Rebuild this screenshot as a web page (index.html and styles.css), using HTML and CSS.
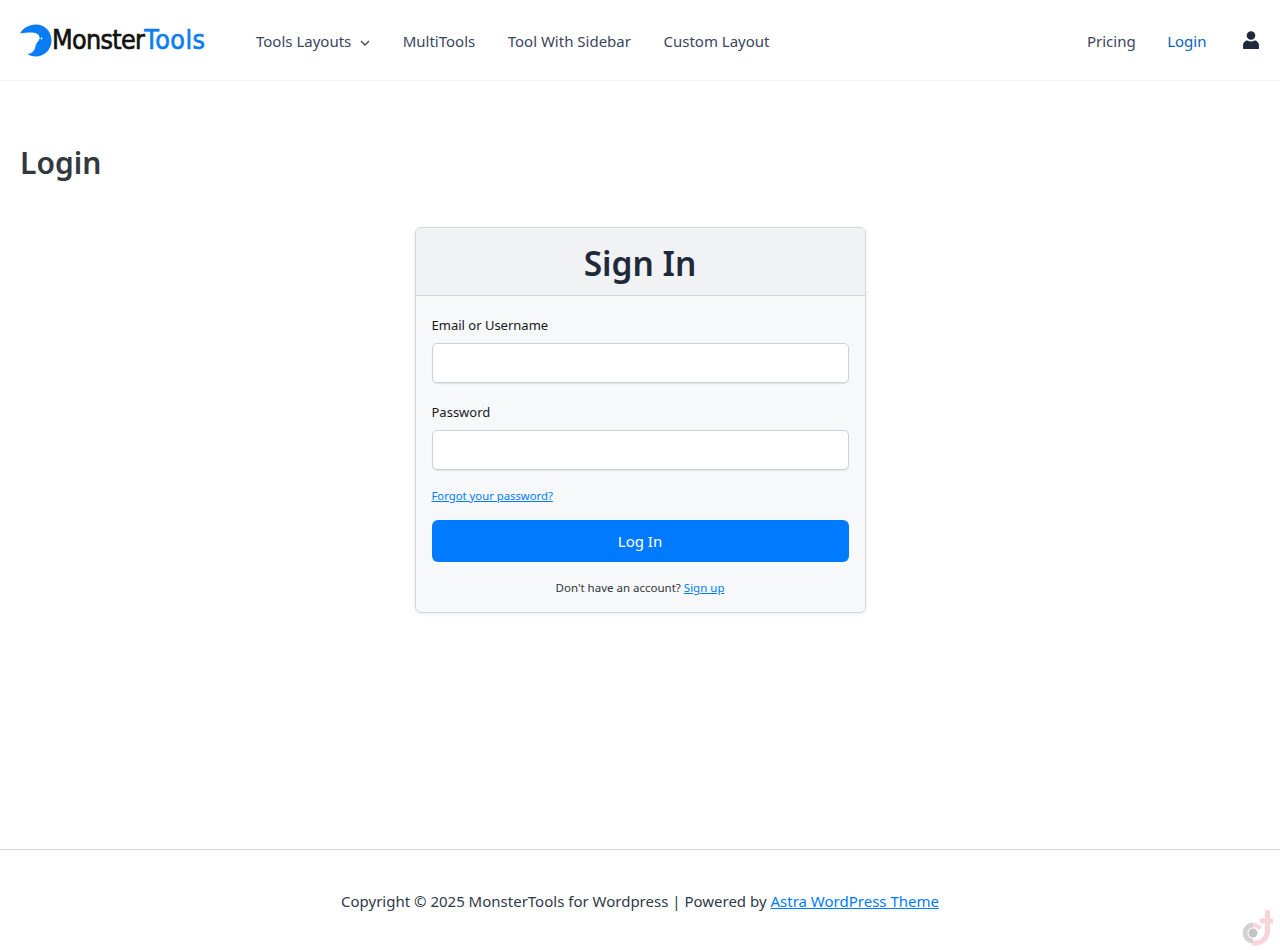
FILE: index.html
```html
<!DOCTYPE html>
<html lang="en">
<head>
    <meta charset="UTF-8">
    <meta name="viewport" content="width=device-width, initial-scale=1.0">
    <title>Login - MonsterTools</title>
    <link rel="stylesheet" href="styles.css">
</head>
<body>
    <header class="site-header">
        <a class="logo" href="#">
            <svg class="logo-mark" width="32" height="33" viewBox="0 0 32 33">
                <path fill="#0a7cf5" d="M0 9.500C3 4 9 0.500 16 0.500C25 0.500 31.500 7.500 31.500 16.500C31.500 25.500 24.500 32.500 15.500 32.500C12 32.500 9.500 31.500 7.500 30C12 29.500 15 26.500 15.500 22C16 19 18.500 17.500 19.500 15C20 13 19 10.500 16.500 9.500C13 8 8 8.500 0 9.500Z"/>
                <circle cx="21.500" cy="14.500" r="0.900" fill="#fff"/>
            </svg>
            <span class="logo-text">Monster<span class="logo-accent">Tools</span></span>
        </a>
        <nav class="main-nav">
            <a href="#">Tools Layouts
                <svg class="caret" width="10" height="6" viewBox="0 0 10 6"><path d="M1 1l4 4 4-4" fill="none" stroke="#3a4560" stroke-width="1.300"/></svg>
            </a>
            <a href="#">MultiTools</a>
            <a href="#">Tool With Sidebar</a>
            <a href="#">Custom Layout</a>
        </nav>
        <nav class="user-nav">
            <a href="#">Pricing</a>
            <a href="#" class="active">Login</a>
            <a href="#" class="user-icon">
                <svg width="16" height="18" viewBox="0 0 16 18"><circle cx="8" cy="4.500" r="4.300" fill="#1e293b"/><path fill="#1e293b" d="M0 17v-2.500C0 11.500 2.500 9.500 4.500 9.500c1 .6 2.200 1 3.500 1s2.500-.4 3.500-1c2 0 4.500 2 4.500 5V17c0 .6-.4 1-1 1H1c-.6 0-1-.4-1-1z"/></svg>
            </a>
        </nav>
    </header>

    <main class="content">
        <h1 class="page-title">Login</h1>

        <div class="login-card">
            <div class="card-head">
                <h2>Sign In</h2>
            </div>
            <form class="card-body" onsubmit="return false;">
                <label for="username">Email or Username</label>
                <input type="text" id="username">
                <label for="password">Password</label>
                <input type="password" id="password">
                <a class="forgot" href="#">Forgot your password?</a>
                <button type="submit">Log In</button>
                <p class="signup">Don't have an account? <a href="#">Sign up</a></p>
            </form>
        </div>
    </main>

    <footer class="site-footer">
        <p>Copyright © 2025 MonsterTools for Wordpress | Powered by <a href="#">Astra WordPress Theme</a></p>
    </footer>

    <svg class="corner-mark" width="34" height="40" viewBox="0 0 34 40">
        <path d="M13 17a8 8 0 0 0 0 16" fill="none" stroke="#d2d2d2" stroke-width="5"/>
        <circle cx="13" cy="25" r="4.500" fill="#c4c4c4"/>
        <path d="M27.500 2v21a12 12 0 0 1-12 12h-3M20 13h13" fill="none" stroke="#f8d3da" stroke-width="5"/>
        <path d="M13 17a8 8 0 0 1 7 4" fill="none" stroke="#f8d3da" stroke-width="4"/>
    </svg>
</body>
</html>
```

FILE: styles.css
```css
body {
    font-family: "Noto Sans", "Open Sans", Arial, sans-serif;
    font-size: 15px;
    color: #1e293b;
    background-color: #fff;
    margin: 0;
    height: 950px;
    overflow: hidden;
    display: flex;
    flex-direction: column;
    position: relative;
}

a {
    text-decoration: none;
    color: inherit;
}

.site-header {
    height: 80px;
    padding: 0 20px;
    border-bottom: 1px solid #eff2f7;
    display: flex;
    align-items: center;
}

.logo {
    display: flex;
    align-items: center;
    width: 236px;
    flex-shrink: 0;
}

.logo-text {
    font-family: "DejaVu Sans", sans-serif;
    font-size: 24px;
    color: #111;
    letter-spacing: -0.700px;
    line-height: 1;
    -webkit-text-stroke: 0.600px #111;
    transform: scaleY(1.12);
    transform-origin: left center;
}

.logo-accent {
    color: #0a7cf5;
    letter-spacing: 0.400px;
    -webkit-text-stroke: 0.600px #0a7cf5;
}

.main-nav {
    display: flex;
    gap: 32.500px;
    flex: 1;
    color: #3a4560;
    padding-top: 2px;
}

.caret {
    margin-left: 5px;
    vertical-align: 1px;
}

.user-nav {
    display: flex;
    align-items: center;
    gap: 31.500px;
    color: #3a4560;
    padding-top: 2px;
}

.user-nav .active {
    color: #0a63c2;
}

.user-icon {
    display: flex;
    margin-left: 5px;
    margin-right: 1px;
    margin-top: -2px;
}

.content {
    flex: 1;
    padding: 0 20px;
}

.page-title {
    font-size: 30px;
    font-weight: 600;
    color: #33373e;
    line-height: 40px;
    margin: 62px 0 44px;
}

.login-card {
    width: 449px;
    margin: 0 auto;
    background: #f7f8fa;
    border: 1px solid #d4d6da;
    border-radius: 6px;
    box-shadow: 0 1px 4px rgba(0, 0, 0, 0.08);
    overflow: hidden;
}

.card-head {
    height: 67px;
    background: #f1f2f4;
    border-bottom: 1px solid #d4d6da;
    display: flex;
    align-items: center;
    justify-content: center;
}

.card-head h2 {
    margin: 4px 0 0;
    font-size: 33.500px;
    font-weight: 600;
    line-height: 1;
}

.card-body {
    padding: 20px 16px 16px;
    display: flex;
    flex-direction: column;
}

label {
    font-size: 13px;
    line-height: 18px;
    color: #16181d;
    margin-bottom: 9px;
}

input {
    height: 40px;
    box-sizing: border-box;
    border: 1px solid #cdd0d6;
    border-radius: 5px;
    background: #fff;
    box-shadow: 0 1px 1px rgba(0, 0, 0, 0.08);
    margin-bottom: 20px;
}

#password {
    margin-bottom: 18px;
}

.forgot {
    font-size: 11.300px;
    line-height: 16px;
    color: #007bff;
    text-decoration: underline;
    margin-bottom: 16px;
}

button {
    height: 42px;
    background-color: #007bff;
    color: #fff;
    border: none;
    border-radius: 6px;
    font-family: inherit;
    font-size: 15px;
    cursor: pointer;
}

.signup {
    margin: 18px 0 0;
    text-align: center;
    font-size: 11.500px;
    line-height: 16px;
    color: #33363b;
}

.signup a {
    color: #007bff;
    text-decoration: underline;
}

.site-footer {
    height: 100px;
    border-top: 1px solid #d6d8dc;
    display: flex;
    align-items: center;
    justify-content: center;
    color: #2f3a4a;
}

.site-footer p {
    margin: 0 0 -2px;
}

.site-footer a {
    color: #007bff;
    text-decoration: underline;
}

.corner-mark {
    position: absolute;
    right: 6px;
    bottom: 2px;
}
```
